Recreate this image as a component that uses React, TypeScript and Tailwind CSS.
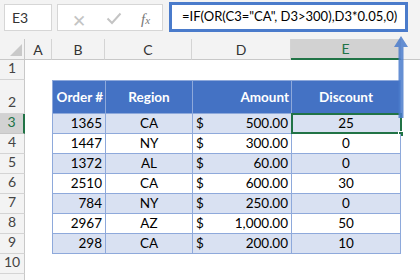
import React from "react";

const font = { fontFamily: "Lato, 'Open Sans', sans-serif" };

type Row = { id: string; region: string; amount: string; disc: string };
const rows: Row[] = [
  { id: "1365", region: "CA", amount: "500.00", disc: "25" },
  { id: "1447", region: "NY", amount: "300.00", disc: "0" },
  { id: "1372", region: "AL", amount: "60.00", disc: "0" },
  { id: "2510", region: "CA", amount: "600.00", disc: "30" },
  { id: "784", region: "NY", amount: "250.00", disc: "0" },
  { id: "2967", region: "AZ", amount: "1,000.00", disc: "50" },
  { id: "298", region: "CA", amount: "200.00", disc: "10" },
];

function RowHead({ n, active }: { n?: number; active?: boolean }) {
  return (
    <div
      className={
        "flex items-end justify-center pb-[1px] border-b border-r text-[14px] " +
        (active
          ? "bg-[#d2d2d2] border-b-[#c6c6c6] border-r-2 border-r-[#217346] text-[#217346]"
          : "bg-[#f3f3f3] border-b-[#d4d4d4] border-r-[#c8c8c8] text-[#444]")
      }
    >
      {n}
    </div>
  );
}

export default function App() {
  return (
    <div className="w-[420px] h-[280px] bg-white overflow-hidden relative text-black" style={font}>
      {/* top bar */}
      <div className="h-[39px] bg-[#f3f3f3] flex items-start pt-[2px]">
        <div className="ml-[4px] mt-[2px] w-[48px] h-[27px] bg-white border border-[#d6d6d6] flex items-center pl-[7px] text-[14px] text-[#333]">
          E3
        </div>
        <div className="ml-[5px] mt-[2px] w-[106px] h-[27px] bg-white border border-[#d6d6d6] flex items-center relative">
          <span className="absolute left-[14px] top-[3px] text-[17px] text-[#c4c4c4]">✕</span>
          <svg className="absolute left-[48px] top-[7px]" width="16" height="13" viewBox="0 0 16 13">
            <path d="M1.5 6.5 L6 11 L14.5 1.5" fill="none" stroke="#c4c4c4" strokeWidth="2" />
          </svg>
          <span
            className="absolute left-[83px] top-[3px] text-[15px] italic text-[#777]"
            style={{ fontFamily: "'Liberation Serif', serif" }}
          >
            f<span className="text-[11px]">x</span>
          </span>
        </div>
        <div className="ml-[6px] w-[239px] h-[30px] bg-white border-[3px] border-[#4a7bcb] flex items-center pl-[10px] text-[13px] text-black whitespace-nowrap">
          =IF(OR(C3="CA", D3&gt;300),D3*0.05,0)
        </div>
      </div>

      {/* sheet grid */}
      <div className="grid grid-cols-[25px_27px_53px_87px_99px_110px_1fr] grid-rows-[21px_20px_34px_20px_20px_20px_20px_20px_20px_20px_20px_20px]">
        {/* header row */}
        <div className="bg-[#f3f3f3] border-b border-r border-[#c8c8c8] relative">
          <svg className="absolute left-[10px] top-[5px]" width="12" height="12" viewBox="0 0 12 12">
            <path d="M12 0 L12 12 L0 12 Z" fill="#c9c9c9" />
          </svg>
        </div>
        {["A", "B", "C", "D"].map((c) => (
          <div
            key={c}
            className="bg-[#f3f3f3] border-b border-r border-b-[#c8c8c8] border-r-[#d4d4d4] flex items-center justify-center text-[14px] text-[#333]"
          >
            {c}
          </div>
        ))}
        <div className="bg-[#d2d2d2] border-b-2 border-r border-b-[#217346] border-r-[#c6c6c6] flex items-center justify-center text-[14px] text-[#217346]">
          E
        </div>
        <div className="bg-[#f3f3f3] border-b border-[#c8c8c8]" />

        {/* row 1 */}
        <RowHead n={1} />
        <div className="col-span-6" />

        {/* row 2: table header */}
        <RowHead n={2} />
        <div />
        <div className="bg-[#4472c4] border border-[#8ea9db] border-r-0 flex items-center justify-end pr-[2px] text-white font-bold text-[13.5px]">
          Order #
        </div>
        <div className="bg-[#4472c4] border-t border-l border-b border-[#8ea9db] flex items-center justify-center text-white font-bold text-[13.5px]">
          Region
        </div>
        <div className="bg-[#4472c4] border-t border-l border-b border-[#8ea9db] flex items-center justify-end pr-[2px] text-white font-bold text-[13.5px]">
          Amount
        </div>
        <div className="bg-[#4472c4] border border-[#8ea9db] flex items-center justify-center text-white font-bold text-[13.5px]">
          Discount
        </div>
        <div />

        {/* data rows */}
        {rows.map((r, i) => {
          const band = i % 2 === 0 ? "bg-[#d9e1f2]" : "bg-white";
          const cell = `${band} border-b border-[#8ea9db] text-[13.5px] flex items-center`;
          return (
            <React.Fragment key={r.id}>
              <RowHead n={i + 3} active={i === 0} />
              <div />
              <div className={`${cell} border-l justify-end pr-[3px]`}>{r.id}</div>
              <div className={`${cell} border-l justify-center`}>{r.region}</div>
              <div className={`${cell} border-l justify-between px-[3px]`}>
                <span>$</span>
                <span>{r.amount}</span>
              </div>
              <div className={`${cell} border-l border-r justify-center relative`}>
                {r.disc}
                {i === 0 && (
                  <>
                    <div className="absolute left-[-1px] top-[-1px] right-[-2px] bottom-[-1px] border-2 border-[#217346]" />
                    <div className="absolute right-[-4px] bottom-[-4px] w-[6px] h-[6px] bg-[#217346] border border-white" />
                  </>
                )}
              </div>
              <div />
            </React.Fragment>
          );
        })}

        {/* rows 10, 11 */}
        <RowHead n={10} />
        <div className="col-span-6" />
        <RowHead />
        <div className="col-span-6" />
      </div>

      {/* blue arrow overlay */}
      <svg className="absolute left-[392px] top-[35px]" width="18" height="84" viewBox="0 0 18 84">
        <path d="M9 1 L16 12 L11.5 12 L11.5 83 L6.5 83 L6.5 12 L2 12 Z" fill="#4a7bcb" fillOpacity="0.85" />
      </svg>
    </div>
  );
}
